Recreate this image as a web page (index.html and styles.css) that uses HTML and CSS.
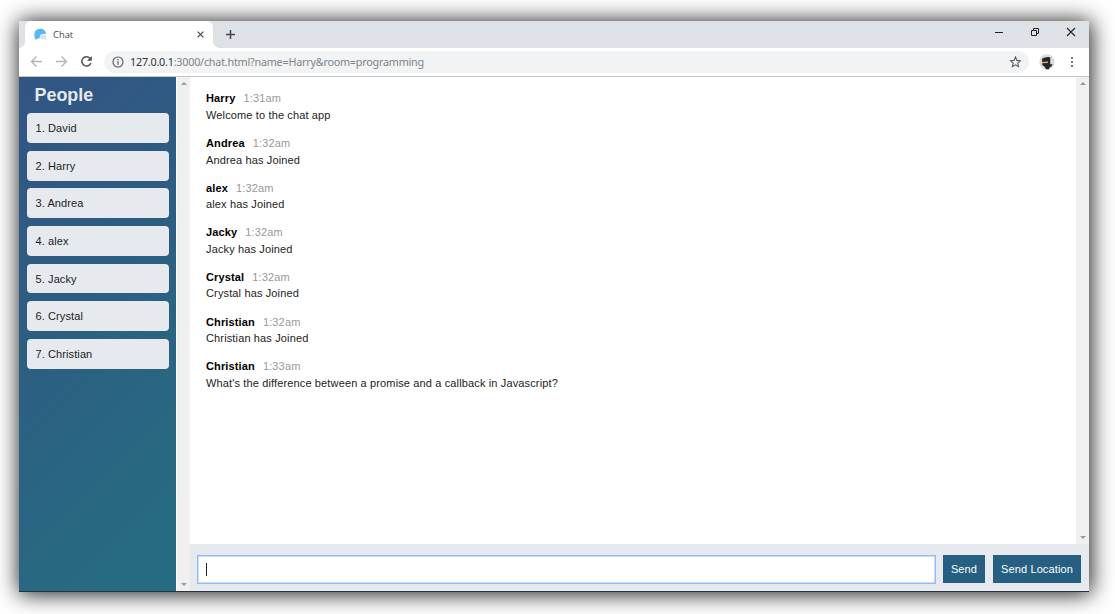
FILE: index.html
```
<!DOCTYPE html>
<html lang="en">
<head>
<meta charset="utf-8">
<title>Chat</title>
<link rel="stylesheet" href="styles.css">
</head>
<body>
<div class="window">
  <div class="tabbar">
    <div class="tab">
      <svg class="favicon" width="13" height="13" viewBox="0 0 13 13"><path d="M1.300 10.800C.4 9.500.3 8 .4 6 .6 2.900 3 .8 6.200.8c3.300 0 5.600 2 5.800 5.200H8.500C6.500 6.200 5.500 7.800 5.800 10.200L4.600 10.300C3.500 11.300 2.500 11.500.8 11.500Z" fill="#5bb8f0"/><path d="M6.200 8.800c.2-1.500 1.500-2.400 3.200-2.300 1.700.1 2.700 1.200 2.600 2.600 0 .9.300 1.700.7 2.300-.9.300-1.600.200-2.300-.1-2 .7-4.500-.3-4.200-2.500Z" fill="#d0e5f7"/></svg>
      <span class="tab-title">Chat</span>
      <svg class="tab-close" width="7" height="7" viewBox="0 0 7 7"><path d="M.6.6l5.800 5.800M6.400.6L.6 6.400" stroke="#4a4d51" stroke-width="1.300"/></svg>
    </div>
    <svg class="newtab" width="11" height="11" viewBox="0 0 11 11"><path d="M5.500 1v9M1 5.500h9" stroke="#45494d" stroke-width="1.500"/></svg>
    <div class="controls">
      <svg width="12" height="12" viewBox="0 0 12 12"><path d="M2 6.500h8" stroke="#222"/></svg>
      <svg width="12" height="12" viewBox="0 0 12 12" fill="none" stroke="#222"><path d="M2.500 4.500h5v5h-5zM4.500 4V2.500h5v5H8"/></svg>
      <svg width="12" height="12" viewBox="0 0 12 12"><path d="M2 2l8 8M10 2l-8 8" stroke="#222" stroke-width="1.100"/></svg>
    </div>
  </div>
  <div class="toolbar">
    <div class="nav">
      <svg width="13" height="13" viewBox="0 0 13 13" fill="none" stroke="#b3b5b8" stroke-width="1.400"><path d="M12 6.500H1.500M6.500 1.500l-5 5 5 5"/></svg>
      <svg width="13" height="13" viewBox="0 0 13 13" fill="none" stroke="#b3b5b8" stroke-width="1.400"><path d="M1 6.500h10.500M6.500 1.500l5 5-5 5"/></svg>
      <svg width="13" height="13" viewBox="0 0 13 13"><path d="M10 3.200A4.700 4.700 0 1 0 10.900 8" fill="none" stroke="#4c4f53" stroke-width="1.500"/><path d="M11.800 1v4.800H7Z" fill="#4c4f53"/></svg>
    </div>
    <div class="omnibox">
      <svg width="12" height="12" viewBox="0 0 12 12"><circle cx="6" cy="6" r="5" fill="none" stroke="#55585c" stroke-width="1.100"/><path d="M6 5.200v3.600M6 3v1.300" stroke="#55585c" stroke-width="1.200"/></svg>
      <span class="url"><b>127.0.0.1</b>:3000/chat.html?name=Harry&amp;room=programming</span>
      <svg class="star" width="12" height="12" viewBox="0 0 12 12"><path d="M6.500 1l1.400 3.400 3.600.3-2.800 2.400.8 3.600-3-1.900-3.100 1.900.8-3.600-2.700-2.400 3.600-.3Z" fill="none" stroke="#5a5d61" stroke-width="1.100"/></svg>
    </div>
    <svg class="avatar" width="16" height="16" viewBox="0 0 16 16"><circle cx="8" cy="8" r="7.700" fill="#dcdcdc"/><path d="M3 4.800Q6.500 2.500 11.200 3.200v7.300l1.600-.6.700.7c-.6 1.700-1.700 2.500-3 2.800l-.5 1.800H7L5.500 12.500 3.300 11Z" fill="#24252a"/><path d="M3 8l6-.4v1.500L3 9.300Z" fill="#efa465"/></svg>
    <svg class="menu" width="4" height="12" viewBox="0 0 4 12" fill="#55585c"><circle cx="2" cy="2" r="1.100"/><circle cx="2" cy="6" r="1.100"/><circle cx="2" cy="10" r="1.100"/></svg>
  </div>
  <div class="page">
    <aside class="sidebar">
      <div class="people">
        <h1>People</h1>
        <ul>
          <li>1. David</li><li>2. Harry</li><li>3. Andrea</li><li>4. alex</li><li>5. Jacky</li><li>6. Crystal</li><li>7. Christian</li>
        </ul>
      </div>
      <div class="scrollbar"><i class="up"></i><i class="down"></i></div>
    </aside>
    <main class="chat">
      <div class="log">
        <div class="messages">
          <article><header><h2>Harry</h2><time>1:31am</time></header><p>Welcome to the chat app</p></article>
          <article><header><h2>Andrea</h2><time>1:32am</time></header><p>Andrea has Joined</p></article>
          <article><header><h2>alex</h2><time>1:32am</time></header><p>alex has Joined</p></article>
          <article><header><h2>Jacky</h2><time>1:32am</time></header><p>Jacky has Joined</p></article>
          <article><header><h2>Crystal</h2><time>1:32am</time></header><p>Crystal has Joined</p></article>
          <article><header><h2>Christian</h2><time>1:32am</time></header><p>Christian has Joined</p></article>
          <article><header><h2>Christian</h2><time>1:33am</time></header><p>What's the difference between a promise and a callback in Javascript?</p></article>
        </div>
        <div class="scrollbar"><i class="up"></i><i class="down"></i></div>
      </div>
      <div class="composer">
        <div class="field"><span class="caret"></span></div>
        <button class="send">Send</button>
        <button class="location">Send Location</button>
      </div>
    </main>
  </div>
</div>
</body>
</html>
```
FILE: styles.css
```
* { box-sizing: border-box; margin: 0; padding: 0; }
body { background: #fff; height: 614px; overflow: hidden; padding: 21px 26px 22px 19px; font-family: "Liberation Sans", Arial, sans-serif; }
svg { display: block; flex: none; }
.window { width: 1070px; height: 571px; display: flex; flex-direction: column; border-bottom: 1px solid #25343f; box-shadow: 1px 1px 21px 1px rgba(0,0,0,.9); background: #fff; }
.tabbar { height: 27px; flex: none; background: #dee1e6; display: flex; align-items: flex-start; padding-left: 6px; }
.tab { position: relative; width: 188px; height: 27px; background: #fff; border-radius: 6px 6px 0 0; display: flex; align-items: center; padding: 0 9px 0 9px; }
.tab::before, .tab::after { content: ""; position: absolute; bottom: 0; width: 6px; height: 6px; }
.tab::before { left: -6px; background: radial-gradient(circle at 0 0, transparent 5.5px, #fff 6px); }
.tab::after { right: -6px; background: radial-gradient(circle at 100% 0, transparent 5.5px, #fff 6px); }
.tab-title { font: 9.4px "Open Sans", sans-serif; color: #45494d; margin-left: 6px; flex: 1; }
.newtab { margin: 8px 0 0 12px; }
.controls { margin-left: auto; display: flex; gap: 24px; padding: 5px 12px 0 0; }
.toolbar { height: 29px; flex: none; display: flex; align-items: center; border-bottom: 1px solid #c4c5c7; padding: 0 14px 1px 11px; }
.nav { display: flex; gap: 12px; }
.omnibox { width: 925px; height: 22px; margin-left: 11px; border-radius: 11px; background: #f1f3f4; display: flex; align-items: center; padding: 0 8px; }
.url { font: 10.800px "Noto Sans", sans-serif; letter-spacing: -.23px; color: #808488; margin-left: 6px; flex: 1; white-space: nowrap; }
.url b { font-weight: 400; color: #303336; }
.avatar { margin-left: 10px; }
.menu { margin-left: auto; margin-right: 1px; }
.page { flex: 1; min-height: 0; display: flex; }
.sidebar { width: 171px; flex: none; display: flex; }
.people { width: 157px; background: linear-gradient(135deg, #325584 0%, #2d5c82 35%, #276b82 88%, #266c82 100%); padding: 0 7.500px 0 8px; color: #e6eaee; }
.people h1 { font-size: 17.900px; line-height: 22px; margin: 7px 0 7.300px 7.500px; }
.people ul { list-style: none; }
.people li { height: 29.8px; margin-bottom: 7.8px; border-radius: 4px; background: #e6eaee; color: #222; font-size: 11px; letter-spacing: .1px; line-height: 30px; padding-left: 8.500px; }
.scrollbar { width: 13px; flex: none; margin-left: auto; background: #f0f0f0; display: flex; flex-direction: column; justify-content: space-between; align-items: center; padding: 5px 0; }
.scrollbar i { border: 3px solid transparent; border-top-width: 0; border-bottom-color: #999; }
.scrollbar .down { border-top: 3px solid #999; border-bottom-width: 0; }
.chat { flex: 1; display: flex; flex-direction: column; }
.log { flex: 1; display: flex; }
.messages { padding: 13.400px 16px; }
.messages article { height: 44.65px; font-size: 11px; letter-spacing: .137px; line-height: 16.5px; color: #222; }
.messages header { display: flex; gap: 8px; }
.messages h2 { font-size: 11px; color: #000; }
.messages time { color: #999; }
.composer { height: 47px; flex: none; background: #e6eaee; display: flex; align-items: flex-start; padding: 11px 8px 0 7px; }
.field { width: 739px; height: 29px; border: 1px solid #95bbf5; box-shadow: inset 0 0 0 .5px #95bbf5; background: #fff; padding: 7px 0 0 7.500px; }
.caret { display: block; width: 1px; height: 13px; background: #222; }
button { height: 28px; border: 0; background: #265f82; color: #fff; font: 11px "Liberation Sans", Arial, sans-serif; letter-spacing: .12px; white-space: nowrap; }
.send { width: 42px; margin-left: 7px; }
.location { width: 88px; margin-left: 8px; }
```
